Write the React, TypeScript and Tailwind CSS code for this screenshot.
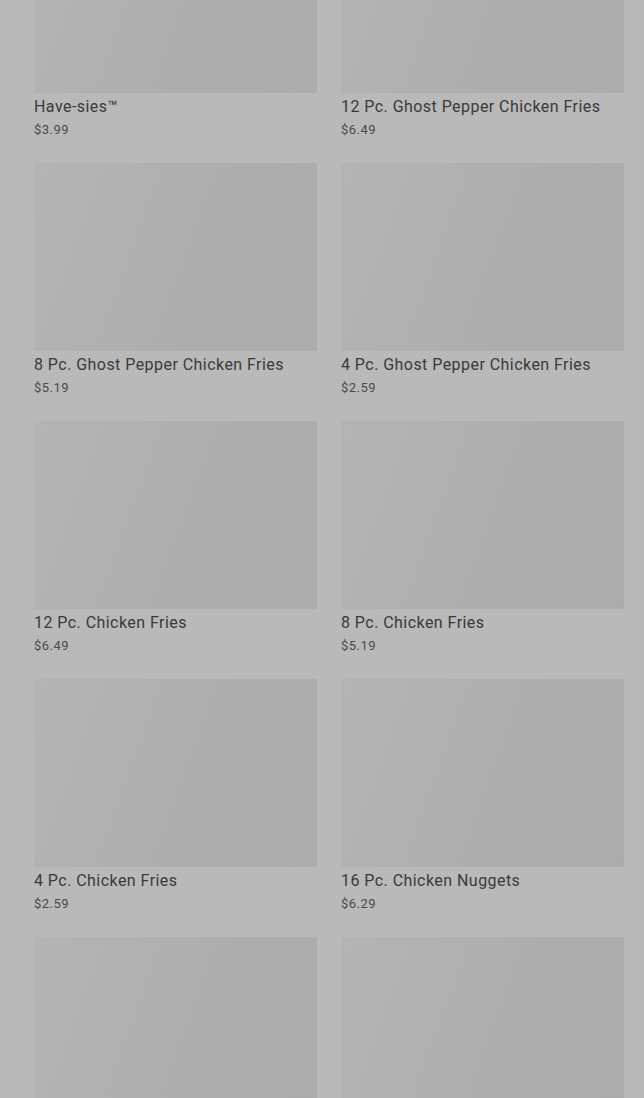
import React from "react";

/* Menu grid shown behind a dimmed overlay */

interface MenuItem {
  name: string;
  price: string;
}

const ITEMS: MenuItem[] = [
  { name: "Have-sies™", price: "$3.99" },
  { name: "12 Pc. Ghost Pepper Chicken Fries", price: "$6.49" },
  { name: "8 Pc. Ghost Pepper Chicken Fries", price: "$5.19" },
  { name: "4 Pc. Ghost Pepper Chicken Fries", price: "$2.59" },
  { name: "12 Pc. Chicken Fries", price: "$6.49" },
  { name: "8 Pc. Chicken Fries", price: "$5.19" },
  { name: "4 Pc. Chicken Fries", price: "$2.59" },
  { name: "16 Pc. Chicken Nuggets", price: "$6.29" },
  { name: "", price: "" },
  { name: "", price: "" },
];

function MenuCard({ item }: { item: MenuItem }) {
  return (
    <div className="flex flex-col">
      {/* image placeholder */}
      <div className="h-[188px] w-full bg-[linear-gradient(110deg,#b4b4b4_0%,#b0b0b0_35%,#adadad_60%,#acacac_100%)]" />
      {item.name && (
        <div className="mt-[2px]">
          <h3 className="text-[16px] leading-6 font-normal text-[#3a3a3a] tracking-[0.45px]">
            {item.name}
          </h3>
          <p className="mt-[1px] text-[13px] leading-5 text-[#4a4a4a] tracking-[0.5px]">
            {item.price}
          </p>
        </div>
      )}
    </div>
  );
}

export default function App() {
  return (
    <div
      className="h-[1098px] w-full overflow-hidden bg-[#b9b9b9] pl-[34px] pr-[20px]"
      style={{ fontFamily: "Roboto, 'Liberation Sans', sans-serif" }}
    >
      <div className="-mt-[95px] grid grid-cols-2 gap-x-6 gap-y-[23px]">
        {ITEMS.map((item, i) => (
          <MenuCard key={i} item={item} />
        ))}
      </div>
    </div>
  );
}
